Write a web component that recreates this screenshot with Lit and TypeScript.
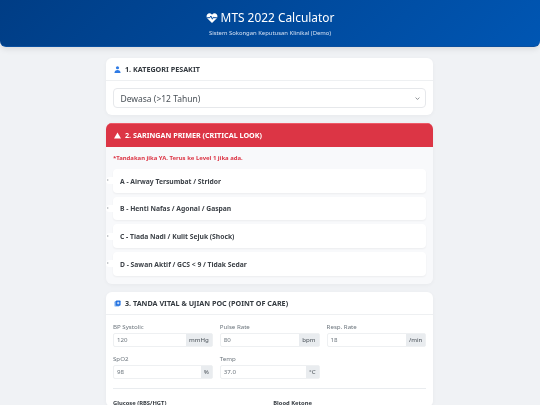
import { LitElement, html, css, svg } from "lit";
import { customElement } from "lit/decorators.js";

const heart = svg`<path d="M8 14.6 1.9 8.5C.4 7 .3 4.4 1.8 2.9 3.4 1.300 6 1.400 7.500 3L8 3.500 8.500 3C10 1.400 12.600 1.300 14.200 2.900 15.700 4.400 15.600 7 14.100 8.500Z"/><path d="M1.500 7.600H5.200L6.500 5.300 8.500 9.600 10 6.600 10.700 7.600H14.500" fill="none" stroke="#0049a0" stroke-width="1.300"/>`;

@customElement("app-root")
export class AppRoot extends LitElement {
  static styles = css`
    :host { display: block; height: 405px; overflow: hidden; background: #f0f2f5; font-family: "Noto Sans", sans-serif; color: #343a40; }
    .top { height: 47.300px; box-sizing: border-box; padding-top: 9px; background: linear-gradient(135deg, #003d85, #0056b3); border-bottom: 1px solid #0a4f9f; border-radius: 0 0 6px 6px; box-shadow: 0 2px 6px rgba(0,0,0,.1); color: #fff; text-align: center; will-change: transform; }
    .title { display: flex; justify-content: center; align-items: center; gap: 3px; font-size: 11.900px; line-height: 17px; font-weight: 400; }
    .title svg { width: 12px; height: 12px; fill: #fff; }
    .sub { margin-top: 2.500px; font-size: 5.900px; line-height: 9px; color: #d3e0f3; }
    main { width: 327.400px; margin: 11px auto 0; display: flex; flex-direction: column; gap: 8.300px; will-change: transform; }
    .card { background: #fff; border-radius: 6px; box-shadow: 0 1px 4px rgba(0,0,0,.04); overflow: hidden; }
    .head { height: 23px; box-sizing: border-box; padding: 0 8px; display: flex; align-items: center; gap: 4px; font-size: 7.200px; font-weight: 700; color: #343a40; border-bottom: 1px solid #eef0f2; }
    .head svg { width: 7px; height: 7px; flex: none; }
    .body { padding: 7px; }
    .select { height: 20px; box-sizing: border-box; padding: 0 5px 0 6.500px; display: flex; justify-content: space-between; align-items: center; border: 1px solid #e6e8eb; border-radius: 4px; font-size: 8.500px; color: #495057; }
    .select svg { width: 5px; height: 5px; }
    .crit { background: #f8f9fb; }
    .crit .head { background: #dc3545; color: #fff; border: none; border-top: 1px solid #ef5a68; height: 23.400px; }
    .note { margin: 0; padding: 7px 7px 0; font-size: 5.950px; line-height: 9px; font-weight: 700; color: #dc3545; }
    .rows { padding: 6.300px 7px 8px; display: flex; flex-direction: column; gap: 4px; }
    .row { position: relative; height: 23.700px; padding-top: 0.800px; box-sizing: border-box; background: #fff; border-radius: 4px; box-shadow: 0 1px 2px rgba(0,0,0,.05); padding-left: 7px; display: flex; align-items: center; font-size: 6.750px; font-weight: 700; color: #3d4248; }
    .knob { position: absolute; left: -7px; top: 8.300px; width: 10px; height: 7px; border-radius: 4px; background: #fff; }
    .knob::before { content: ""; position: absolute; left: 0.500px; top: 2px; border-left: 2px solid #b5b9bd; border-top: 1.500px solid transparent; border-bottom: 1.500px solid transparent; }
    .vitals { padding: 7px 7px 0; }
    .grid { display: grid; grid-template-columns: repeat(3, 1fr); gap: 7px; }
    label { display: block; font-size: 6.150px; line-height: 9px; color: #6c757d; margin-bottom: 2px; }
    .input { display: flex; height: 14px; border: 1px solid #eef0f2; border-radius: 2px; font-size: 6.150px; line-height: 12px; color: #6c757d; box-sizing: border-box; }
    .input span { flex: 1; padding-left: 3px; min-width: 0; }
    .input b { font-weight: 400; background: #e9ecef; color: #495057; padding: 0 3px; }
    hr { border: 0; border-top: 1px solid #e9ecef; margin: 9px 0 10px; }
    .poc { display: grid; grid-template-columns: 1fr 1fr; gap: 7px; }
    .poc div { font-size: 5.800px; font-weight: 700; color: #343a40; }
  `;

  render() {
    const rows = ["A - Airway Tersumbat / Stridor", "B - Henti Nafas / Agonal / Gaspan", "C - Tiada Nadi / Kulit Sejuk (Shock)", "D - Sawan Aktif / GCS < 9 / Tidak Sedar"];
    const fields = [["BP Systolic", "120", "mmHg"], ["Pulse Rate", "80", "bpm"], ["Resp. Rate", "18", "/min"], ["SpO2", "98", "%"], ["Temp", "37.0", "°C"]];
    return html`
      <header class="top">
        <div class="title"><svg viewBox="0 0 16 16">${heart}</svg>MTS 2022 Calculator</div>
        <div class="sub">Sistem Sokongan Keputusan Klinikal (Demo)</div>
      </header>
      <main>
        <section class="card">
          <div class="head">
            <svg viewBox="0 0 16 16" fill="#2f7be5"><circle cx="8" cy="4" r="3.600"/><path d="M1 16c0-5 3-7 7-7s7 2 7 7z"/></svg>
            1. KATEGORI PESAKIT
          </div>
          <div class="body">
            <div class="select">Dewasa (&gt;12 Tahun)
              <svg viewBox="0 0 16 16" fill="none" stroke="#495057" stroke-width="2"><path d="M2 5l6 6 6-6"/></svg>
            </div>
          </div>
        </section>
        <section class="card crit">
          <div class="head">
            <svg viewBox="0 0 16 16" fill="#fff"><path d="M8 1 16 15H0z"/></svg>
            2. SARINGAN PRIMER (CRITICAL LOOK)
          </div>
          <p class="note">*Tandakan jika YA. Terus ke Level 1 jika ada.</p>
          <div class="rows">
            ${rows.map((r) => html`<div class="row"><i class="knob"></i>${r}</div>`)}
          </div>
        </section>
        <section class="card">
          <div class="head">
            <svg viewBox="0 0 16 16"><rect x="1" y="3" width="11" height="12" rx="2" fill="#7fb0ef"/><rect x="4" y="1" width="11" height="12" rx="2" fill="#1f6fe0"/><path d="M9.500 4v6M6.500 7h6" stroke="#fff" stroke-width="1.800"/></svg>
            3. TANDA VITAL &amp; UJIAN POC (POINT OF CARE)
          </div>
          <div class="vitals">
            <div class="grid">
              ${fields.map(
                ([l, v, u]) => html`<div><label>${l}</label><div class="input"><span>${v}</span><b>${u}</b></div></div>`
              )}
            </div>
            <hr />
            <div class="poc"><div>Glucose (RBS/HGT)</div><div>Blood Ketone</div></div>
          </div>
        </section>
      </main>
    `;
  }
}
